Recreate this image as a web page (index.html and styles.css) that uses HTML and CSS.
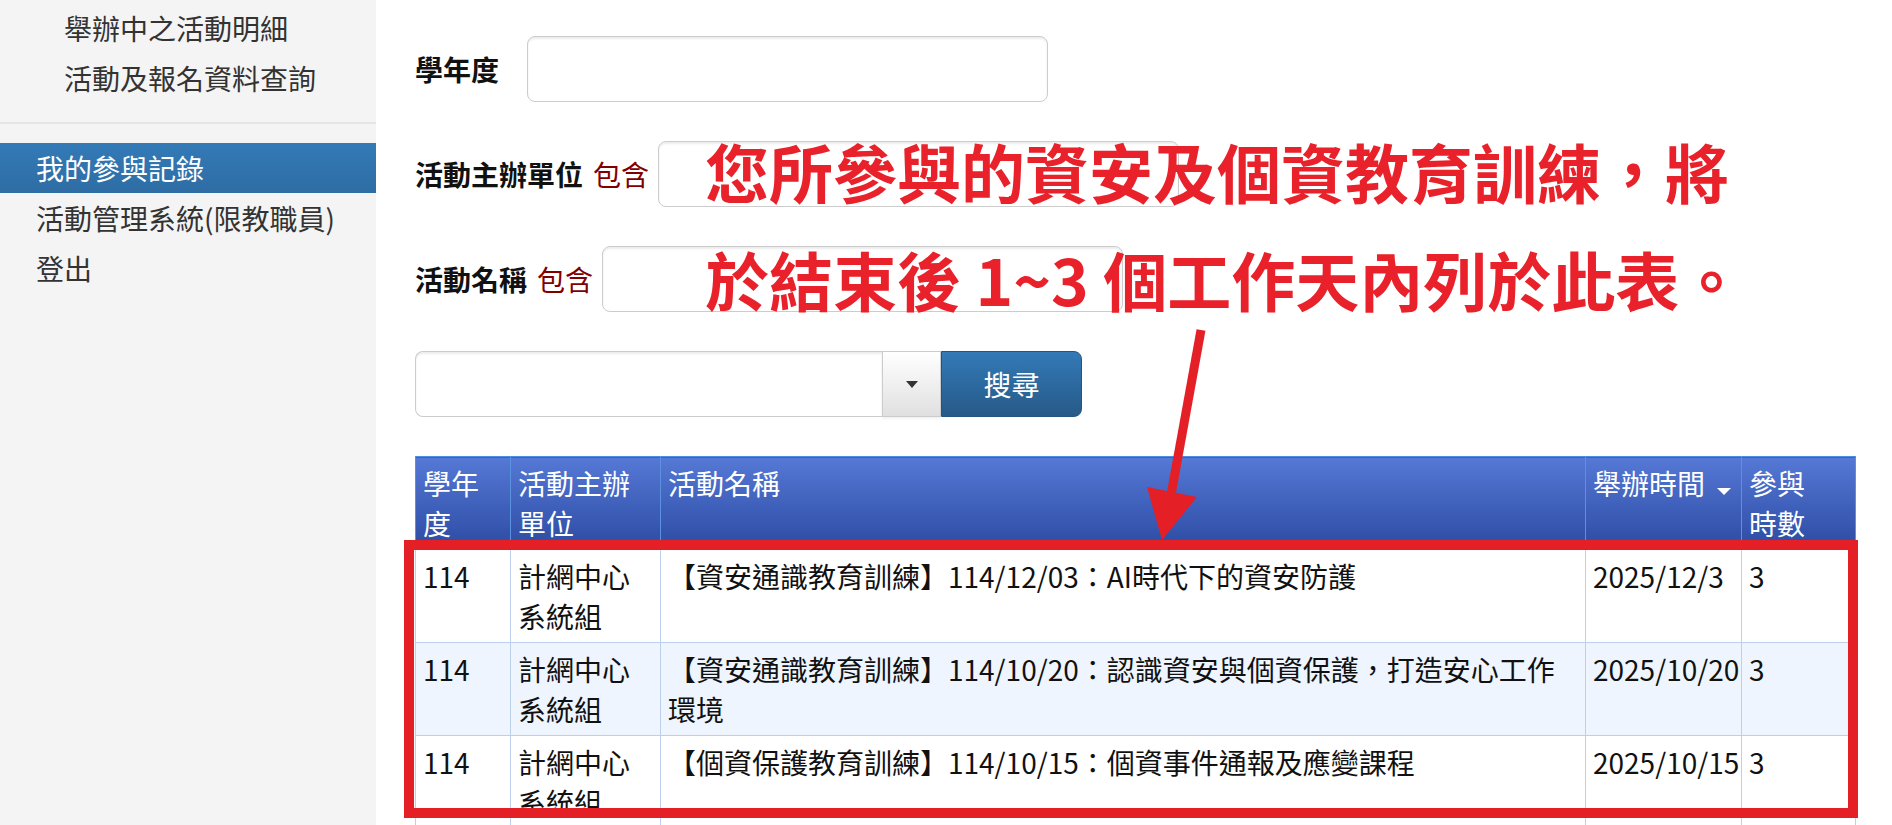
FILE: index.html
```html
<!DOCTYPE html>
<html lang="zh-Hant">
<head>
    <meta charset="UTF-8">
    <meta name="viewport" content="width=device-width, initial-scale=1.0">
    <title>我的參與記錄</title>
    <link rel="stylesheet" href="styles.css">
</head>
<body>
<div class="page">
    <aside class="sidebar">
        <ul class="nav">
            <li class="sub"><a href="#">舉辦中之活動明細</a></li>
            <li class="sub"><a href="#">活動及報名資料查詢</a></li>
            <li class="divider"></li>
            <li class="active"><a href="#">我的參與記錄</a></li>
            <li><a href="#">活動管理系統(限教職員)</a></li>
            <li><a href="#">登出</a></li>
        </ul>
    </aside>

    <main class="content">
        <form class="filters">
            <div class="field">
                <label class="field-label wide" for="year">學年度</label>
                <input type="text" id="year" class="field-input">
            </div>
            <div class="field">
                <label class="field-label" for="unit">活動主辦單位<span class="hint">包含</span></label>
                <input type="text" id="unit" class="field-input">
            </div>
            <div class="field">
                <label class="field-label" for="name">活動名稱<span class="hint">包含</span></label>
                <input type="text" id="name" class="field-input">
            </div>
            <div class="search-row">
                <div class="combo">
                    <input type="text" class="combo-input">
                    <button type="button" class="combo-toggle"><span class="caret"></span></button>
                </div>
                <button type="submit" class="btn-search">搜尋</button>
            </div>
        </form>

        <table class="records">
            <colgroup>
                <col class="col-year">
                <col class="col-unit">
                <col>
                <col class="col-date">
                <col class="col-hours">
            </colgroup>
            <thead>
                <tr>
                    <th>學年度</th>
                    <th>活動主辦單位</th>
                    <th>活動名稱</th>
                    <th class="sorted">舉辦時間<span class="sort-caret"></span></th>
                    <th>參與時數</th>
                </tr>
            </thead>
            <tbody>
                <tr>
                    <td>114</td>
                    <td>計網中心系統組</td>
                    <td>【資安通識教育訓練】114/12/03：AI時代下的資安防護</td>
                    <td class="nowrap">2025/12/3</td>
                    <td>3</td>
                </tr>
                <tr class="alt">
                    <td>114</td>
                    <td>計網中心系統組</td>
                    <td>【資安通識教育訓練】114/10/20：認識資安與個資保護，打造安心工作<br>環境</td>
                    <td class="nowrap">2025/10/20</td>
                    <td>3</td>
                </tr>
                <tr>
                    <td>114</td>
                    <td>計網中心系統組</td>
                    <td>【個資保護教育訓練】114/10/15：個資事件通報及應變課程</td>
                    <td class="nowrap">2025/10/15</td>
                    <td>3</td>
                </tr>
            </tbody>
        </table>
    </main>

    <!-- annotation drawn over the page -->
    <div class="note">
        <span>您所參與的資安及個資教育訓練，將</span>
        <span>於結束後 1~3 個工作天內列於此表。</span>
    </div>
    <svg class="marks" width="1892" height="825" viewBox="0 0 1892 825">
        <rect x="409" y="545" width="1444" height="268" fill="none" stroke="#e41f26" stroke-width="10"/>
        <line x1="1201" y1="330" x2="1171" y2="495" stroke="#e41f26" stroke-width="9"/>
        <polygon points="1147,487 1197,497 1162,540" fill="#e41f26"/>
    </svg>
</div>
</body>
</html>
```

FILE: styles.css
```css
* {
    box-sizing: border-box;
    margin: 0;
    padding: 0;
}

body {
    font-family: "Noto Sans CJK TC", "Noto Sans", sans-serif;
    font-size: 28px;
    line-height: 40px;
    color: #111;
    background-color: #fff;
    overflow: hidden;
}

.page {
    position: relative;
    display: flex;
    min-height: 825px;
}

/* sidebar */

.sidebar {
    width: 376px;
    flex-shrink: 0;
    background-color: #f4f4f4;
}

.nav {
    list-style: none;
    padding-top: 3px;
}

.nav a {
    display: block;
    padding: 10px 15px 10px 36px;
    line-height: 30px;
    color: #333;
    text-decoration: none;
}

.nav .sub a {
    padding-left: 64px;
}

.nav .divider {
    height: 2px;
    margin: 19px 0;
    background-color: #e5e5e5;
}

.nav .active a {
    color: #fff;
    background-image: linear-gradient(to bottom, #337ab7 0%, #2e6da4 100%);
}

/* content */

.content {
    flex: 1;
    padding: 36px 36px 0 39px;
}

.filters {
    display: flex;
    flex-direction: column;
    gap: 39px;
    margin-bottom: 39px;
}

.field {
    display: flex;
    align-items: center;
}

.field-label {
    font-weight: bold;
    color: #111;
    margin-right: 9px;
}

.field-label.wide {
    margin-right: 28px;
}

.hint {
    font-weight: normal;
    color: #800000;
    margin-left: 10px;
}

.field-input {
    width: 521px;
    height: 66px;
    padding: 0 24px;
    border: 1px solid #ccc;
    border-radius: 8px;
    box-shadow: inset 0 2px 2px rgba(0, 0, 0, 0.075);
    font: inherit;
}

.search-row {
    display: flex;
    height: 66px;
}

.combo {
    display: flex;
    width: 526px;
}

.combo-input {
    width: 467px;
    height: 66px;
    border: 1px solid #ccc;
    border-right: none;
    border-radius: 8px 0 0 8px;
    box-shadow: inset 0 2px 2px rgba(0, 0, 0, 0.075);
    font: inherit;
}

.combo-toggle {
    width: 59px;
    height: 66px;
    border: 1px solid #ccc;
    background-image: linear-gradient(to bottom, #fff 0%, #e0e0e0 100%);
    box-shadow: 0 2px 2px rgba(0, 0, 0, 0.05);
    display: flex;
    align-items: center;
    justify-content: center;
}

.caret {
    width: 0;
    height: 0;
    border-left: 6px solid transparent;
    border-right: 6px solid transparent;
    border-top: 7px solid #333;
}

.btn-search {
    width: 141px;
    height: 66px;
    border: 1px solid #245580;
    border-radius: 0 8px 8px 0;
    background-image: linear-gradient(to bottom, #337ab7 0%, #265a88 100%);
    color: #fff;
    font: inherit;
    cursor: pointer;
}

/* table */

.records {
    width: 100%;
    table-layout: fixed;
    border-collapse: collapse;
}

.col-year { width: 95px; }
.col-unit { width: 150px; }
.col-date { width: 156px; }
.col-hours { width: 114px; }

.records th {
    position: relative;
    padding: 6px 30px 6px 7px;
    text-align: left;
    font-weight: normal;
    color: #fff;
    vertical-align: top;
    background-image: linear-gradient(to bottom, #5579d6 0%, #2c4ba2 100%);
    border-top: 1px solid #4a8fe2;
    border-left: 1px solid #5a92e0;
    border-right: 1px solid #5a92e0;
}

.sort-caret {
    position: absolute;
    right: 10px;
    top: 31px;
    width: 0;
    height: 0;
    border-left: 7px solid transparent;
    border-right: 7px solid transparent;
    border-top: 7px solid #fff;
}

.records td {
    padding: 6px 7px;
    vertical-align: top;
    border: 1px solid #bcd0ee;
}

.records tr.alt td {
    background-color: #eef5fe;
}

.nowrap {
    white-space: nowrap;
}

/* annotation */

.note {
    position: absolute;
    left: 705px;
    top: 116px;
    font-size: 64px;
    line-height: 108px;
    font-weight: bold;
    color: #e9212a;
    white-space: nowrap;
}

.note span {
    display: block;
}

.marks {
    position: absolute;
    left: 0;
    top: 0;
    pointer-events: none;
}
```
